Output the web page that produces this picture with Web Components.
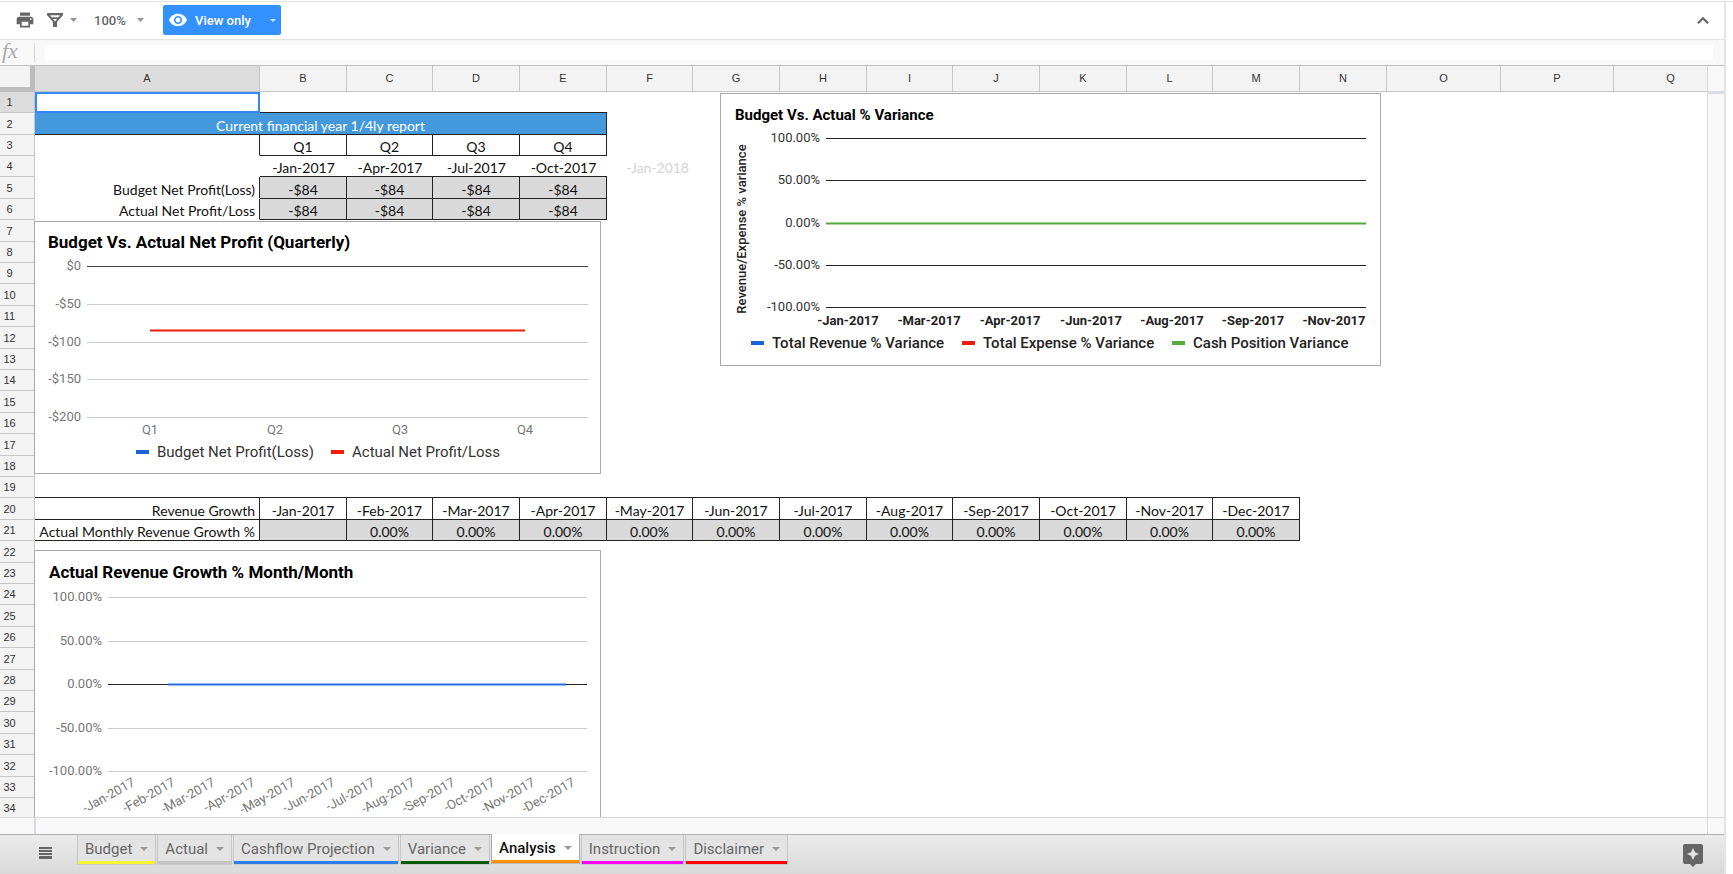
<!DOCTYPE html>
<html lang="en">
<head>
<meta charset="utf-8">
<title>Analysis</title>
<style>
  body { margin: 0; background: #fff; font-family: Roboto, sans-serif; }
</style>
</head>
<body>
<sheet-app></sheet-app>

<script>
class SheetElement extends HTMLElement {
  constructor() {
    super();
    this.attachShadow({ mode: "open" });
  }
  connectedCallback() {
    this.render();
  }
}

class ToolBar extends SheetElement {
  render() {
    this.shadowRoot.innerHTML = `
      <style>
        :host {
          display: flex;
          align-items: center;
          height: 36px;
          padding: 0 11px 1px 13px;
          border-bottom: 1px solid #e2e2e2;
          color: #666;
        }
        button, select {
          appearance: none;
          display: flex;
          align-items: center;
          height: 30px;
          margin: 0;
          padding: 0;
          border: 0;
          background: none;
          color: inherit;
          font: 500 13px Roboto, sans-serif;
        }
        svg { display: block; fill: currentColor; }
        .print { width: 24px; justify-content: center; margin-right: 8px; }
        .filter { gap: 5px; margin-right: 17px; }
        .zoom { display: flex; align-items: center; margin-right: 19px; }
        .zoom select { width: 43px; }
        .view {
          width: 118px;
          padding: 0 5px 0 6px;
          border-radius: 2px;
          background: #3390ff;
          color: #fff;
        }
        .view .eye { margin-right: 8px; }
        .view .caret { margin-left: auto; }
        .hide { margin-left: auto; }
      </style>
      <button class="print" aria-label="Print">
        <svg width="20" height="20" viewBox="0 0 24 24"><path d="M19 8H5c-1.660 0-3 1.340-3 3v6h4v4h12v-4h4v-6c0-1.660-1.340-3-3-3zm-3 11H8v-5h8v5zm3-7c-.55 0-1-.45-1-1s.45-1 1-1 1 .45 1 1-.45 1-1 1zm-1-9H6v4h12V3z"/></svg>
      </button>
      <button class="filter" aria-label="Filter views">
        <svg width="20" height="20" viewBox="0 0 20 20"><path fill-rule="evenodd" d="M2 3h16v2l-6 7v5H8v-5L2 5zM5 5.200l1.600 2h6.800l1.600-2zM8 9l2 2.500L12 9z"/></svg>
        <svg width="7" height="4" viewBox="0 0 7 4" fill-opacity=".7"><path d="M0 0h7L3.500 4z"/></svg>
      </button>
      <label class="zoom">
        <select aria-label="Zoom"><option>100%</option></select>
        <svg width="7" height="4" viewBox="0 0 7 4" fill-opacity=".7"><path d="M0 0h7L3.500 4z"/></svg>
      </label>
      <button class="view">
        <svg class="eye" width="18" height="18" viewBox="1 2 22 20"><path d="M12 4.500C7 4.500 2.730 7.610 1 12c1.730 4.390 6 7.500 11 7.500s9.270-3.110 11-7.500c-1.730-4.390-6-7.500-11-7.500zM12 17c-2.760 0-5-2.240-5-5s2.240-5 5-5 5 2.240 5 5-2.240 5-5 5zm0-8c-1.660 0-3 1.340-3 3s1.340 3 3 3 3-1.340 3-3-1.340-3-3-3z"/></svg>
        View only
        <svg class="caret" width="6" height="3" viewBox="0 0 6 3" fill-opacity=".8"><path d="M0 0h6L3 3z"/></svg>
      </button>
      <button class="hide" aria-label="Hide the menus">
        <svg width="20" height="20" viewBox="0 0 24 24"><path d="M12 8l-7 7 1.800 1.800 5.200-5.200 5.200 5.200L19 15z"/></svg>
      </button>
    `;
  }
}
customElements.define("tool-bar", ToolBar);

class FormulaBar extends SheetElement {
  render() {
    this.shadowRoot.innerHTML = `
      <style>
        :host {
          display: flex;
          align-items: center;
          height: 25px;
          padding-right: 11px;
          background: #f8f8f8;
        }
        label {
          width: 32px;
          height: 19px;
          margin-right: 10px;
          border-right: 1px solid #d4d4d4;
          padding-left: 2px;
          color: #aaa;
          font: italic 22px/15px "Liberation Serif", serif;
        }
        input {
          flex: 1;
          height: 16px;
          padding: 0;
          border: 0;
          background: #fff;
        }
      </style>
      <label for="formula">fx</label>
      <input id="formula" type="text" readonly>
    `;
  }
}
customElements.define("formula-bar", FormulaBar);

const columns = "ABCDEFGHIJKLMNOPQ".split("");
const months = ["Jan", "Feb", "Mar", "Apr", "May", "Jun", "Jul", "Aug", "Sep", "Oct", "Nov", "Dec"].map((m) => `-${m}-2017`);

// class letters: b/r = bottom/right border, g = grey fill, e = end aligned
const fill = (n, text, cls) => Array.from({ length: n }, () => [text, cls]);
const cells = {
  1: [["", "sel"], ...fill(4, "", "b")],
  2: [["Current financial year 1/4ly report", "b r title", 5]],
  3: [["", "r"], ...["Q1", "Q2", "Q3", "Q4"].map((q) => [q, "b r"])],
  4: [["", ""], ...[0, 3, 6, 9].map((m) => [months[m], "b"]), ["-Jan-2018", "e faint"]],
  5: [["Budget Net Profit(Loss)", "e r"], ...fill(4, "-$84", "b r g")],
  6: [["Actual Net Profit/Loss", "e r"], ...fill(4, "-$84", "b r g")],
  19: fill(13, "", "b"),
  20: [["Revenue Growth", "e b r"], ...months.map((m) => [m, "b r"])],
  21: [["Actual Monthly Revenue Growth %", "e b r"], ["", "b r g"], ...fill(11, "0.00%", "b r g")],
};

class SheetGrid extends SheetElement {
  row(n) {
    let used = 0;
    const filled = (cells[n] || []).map(([text, cls, span = 1]) => {
      used += span;
      return `<td class="${cls}" colspan="${span}">${text}</td>`;
    });
    const rest = columns.length - used;
    return `<tr><th scope="row">${n}</th>${filled.join("")}<td colspan="${rest}"></td></tr>`;
  }
  render() {
    const rows = Array.from({ length: 34 }, (_, i) => this.row(i + 1)).join("");
    this.shadowRoot.innerHTML = `
      <style>
        :host { display: block; position: relative; overflow: hidden; }
        table {
          width: 1728px;
          table-layout: fixed;
          border-collapse: separate;
          border-spacing: 0;
          border-top: 1px solid #c0c0c0;
        }
        col { width: 87px; }
        col:nth-child(3n+4) { width: 86px; }
        col.head { width: 35px; }
        col.a { width: 225px; }
        col.o { width: 114px; }
        col.p { width: 113px; }
        th, td { box-sizing: border-box; padding: 0; white-space: nowrap; }
        th {
          border-right: 1px solid #c6c6c6;
          border-bottom: 1px solid #c6c6c6;
          background: #f3f3f3;
          color: #333;
          font: 11px "Liberation Sans", sans-serif;
        }
        thead tr { height: 26px; }
        thead th { padding-bottom: 2px; }
        thead td {
          border-right: 5px solid #bcbcbc;
          border-bottom: 5px solid #bcbcbc;
          background: #f3f3f3;
        }
        thead th:nth-child(2), tbody tr:first-child th { background: #dcdcdc; }
        tbody tr { height: 21px; }
        tbody tr:nth-child(5n+2), tbody tr:nth-child(5n+5) { height: 22px; }
        tbody th { padding-right: 15px; }
        tbody td {
          height: 20px;
          border-bottom: 1px solid transparent;
          vertical-align: bottom;
          text-align: center;
          color: #111;
          font: 14px/16px Lato, sans-serif;
        }
        tbody .b { border-bottom: 1px solid #222; }
        tbody .r { border-right: 1px solid #222; }
        tbody .g { background: #d9d9d9; }
        tbody .e { padding-right: 4px; text-align: right; }
        tbody .faint { color: #d4d4d4; }
        tbody .title { background: #4499dc; color: #fff; }
        tbody .sel { border: 2px solid #3388f5; }
      </style>
      <table>
        <colgroup>
          <col class="head"><col class="a">
          ${"<col>".repeat(13)}
          <col class="o"><col class="p"><col class="o">
        </colgroup>
        <thead><tr><td></td>${columns.map((c) => `<th scope="col">${c}</th>`).join("")}</tr></thead>
        <tbody>${rows}</tbody>
      </table>
      <slot></slot>
    `;
  }
}
customElements.define("sheet-grid", SheetGrid);

const charts = {
  quarterly: {
    width: 567, height: 253,
    title: { text: "Budget Vs. Actual Net Profit (Quarterly)", x: 14, y: 27, size: 17 },
    plot: { left: 53, right: 554 },
    ticks: [["$0", 45, "#444"], ["-$50", 83, "#ccc"], ["-$100", 121, "#ccc"], ["-$150", 158, "#ccc"], ["-$200", 196, "#ccc"]],
    tickColor: "#777",
    line: { x1: 116, x2: 491, y: 109, color: "#ee1c08" },
    labels: { names: ["Q1", "Q2", "Q3", "Q4"], x: 116, step: 125, y: 213, color: "#777", weight: 400 },
    legend: { y: 236, color: "#333", weight: 400, items: [["Budget Net Profit(Loss)", 102, "#1a62d8"], ["Actual Net Profit/Loss", 297, "#ee1c08"]] },
  },
  variance: {
    width: 661, height: 273,
    title: { text: "Budget Vs. Actual % Variance", x: 15, y: 27, size: 15 },
    plot: { left: 106, right: 646 },
    ticks: [["100.00%", 45, "#222"], ["50.00%", 87, "#222"], ["0.00%", 130, "#222"], ["-50.00%", 172, "#222"], ["-100.00%", 214, "#222"]],
    tickColor: "#333",
    line: { x1: 106, x2: 646, y: 130, color: "#55aa3c" },
    labels: { names: [0, 2, 3, 5, 7, 8, 10].map((m) => months[m]), x: 128, step: 81, y: 232, color: "#222", weight: 700 },
    side: { text: "Revenue/Expense % variance", x: 26, y: 136 },
    legend: { y: 255, color: "#222", weight: 500, items: [["Total Revenue % Variance", 31, "#1a62d8"], ["Total Expense % Variance", 242, "#ee1c08"], ["Cash Position Variance", 452, "#55aa3c"]] },
  },
  growth: {
    width: 567, height: 290,
    title: { text: "Actual Revenue Growth % Month/Month", x: 15, y: 28, size: 17 },
    plot: { left: 74, right: 553 },
    ticks: [["100.00%", 47, "#ccc"], ["50.00%", 91, "#ccc"], ["0.00%", 134, "#222"], ["-50.00%", 178, "#ccc"], ["-100.00%", 221, "#ccc"]],
    tickColor: "#777",
    line: { x1: 134, x2: 532, y: 134, color: "#2a6ce0" },
    labels: { names: months, x: 102, step: 40, y: 235, color: "#777", weight: 400, rotate: true },
  },
};

class SheetChart extends SheetElement {
  render() {
    const c = charts[this.getAttribute("name")];
    const ticks = c.ticks.map(([text, y, color]) => `
      <path d="M${c.plot.left} ${y}.5H${c.plot.right}" stroke="${color}"/>
      <text x="${c.plot.left - 6}" y="${y + 4}" text-anchor="end" font-size="13" fill="${c.tickColor}">${text}</text>`).join("");
    const l = c.labels;
    const labels = l.names.map((name, i) => {
      const x = l.x + i * l.step;
      return l.rotate
        ? `<text transform="translate(${x} ${l.y}) rotate(-29)" text-anchor="end" font-size="13" fill="${l.color}">${name}</text>`
        : `<text x="${x}" y="${l.y}" text-anchor="middle" font-size="13" font-weight="${l.weight}" fill="${l.color}">${name}</text>`;
    }).join("");
    const side = c.side
      ? `<text transform="translate(${c.side.x} ${c.side.y}) rotate(-90)" text-anchor="middle" font-size="13" font-weight="500" fill="#222">${c.side.text}</text>`
      : "";
    const legend = c.legend
      ? c.legend.items.map(([text, x, color]) => `
        <rect x="${x}" y="${c.legend.y - 7}" width="13" height="4" fill="${color}"/>
        <text x="${x + 21}" y="${c.legend.y}" font-size="15" font-weight="${c.legend.weight}" fill="${c.legend.color}">${text}</text>`).join("")
      : "";
    this.shadowRoot.innerHTML = `
      <style>
        :host {
          display: block;
          box-sizing: border-box;
          border: 1px solid #aaa;
          background: #fff;
        }
        svg { display: block; font-family: Roboto, sans-serif; }
      </style>
      <svg width="${c.width - 2}" height="${c.height - 2}" viewBox="1 1 ${c.width - 2} ${c.height - 2}">
        <text x="${c.title.x}" y="${c.title.y}" font-size="${c.title.size}" font-weight="700" fill="#000">${c.title.text}</text>
        ${ticks}
        <path d="M${c.line.x1} ${c.line.y}.5H${c.line.x2}" stroke="${c.line.color}" stroke-width="2"/>
        ${labels}${side}${legend}
      </svg>
    `;
  }
}
customElements.define("sheet-chart", SheetChart);

class SheetTab extends SheetElement {
  render() {
    this.shadowRoot.innerHTML = `
      <style>
        :host { display: block; }
        button {
          display: flex;
          align-items: center;
          gap: 8px;
          height: 30px;
          margin: 0;
          padding: 0 7px 2px;
          border: 1px solid #c4c4c4;
          border-top: 0;
          border-bottom: 1px solid #ccc;
          background: #e3e3e3;
          box-shadow: inset 0 -3px var(--tab-color);
          color: #666;
          font: 15px Roboto, sans-serif;
        }
        :host([active]) button {
          border-color: #aaa #aaa #bbb;
          background: #fff;
          color: #111;
          font-weight: 500;
          margin-top: -1px;
        }
        svg { display: block; fill: #999; }
      </style>
      <button role="tab">
        <slot></slot>
        <svg width="8" height="4" viewBox="0 0 8 4"><path d="M0 0h8L4 4z"/></svg>
      </button>
    `;
  }
}
customElements.define("sheet-tab", SheetTab);

class SheetTabs extends SheetElement {
  render() {
    this.shadowRoot.innerHTML = `
      <style>
        :host {
          display: flex;
          align-items: flex-start;
          height: 39px;
          border-top: 1px solid #b0b0b0;
          background: linear-gradient(#ebebeb, #d9d9d9);
        }
        .icon { display: flex; margin: 0; padding: 0; border: 0; background: none; }
        .all { margin: 12px 25px 0 39px; }
        .explore { margin: 9px 21px 0 auto; }
        nav { display: flex; gap: 1px; }
        svg { display: block; fill: #666; }
      </style>
      <button class="icon all" aria-label="All sheets">
        <svg width="13" height="12" viewBox="0 0 13 12"><path d="M0 0h13v2H0zM0 3h13v2H0zM0 6h13v2H0zM0 9h13v3H0z"/></svg>
      </button>
      <nav role="tablist"><slot></slot></nav>
      <button class="icon explore" aria-label="Explore">
        <svg width="20" height="23" viewBox="0 0 20 23"><path fill-rule="evenodd" d="M2 0h16a2 2 0 0 1 2 2v16a2 2 0 0 1-2 2h-5l-3 3-3-3H2a2 2 0 0 1-2-2V2a2 2 0 0 1 2-2zm8 4l-2 4.200L4 10l4 1.800L10 16l2-4.200L16 10l-4-1.800z"/></svg>
      </button>
    `;
  }
}
customElements.define("sheet-tabs", SheetTabs);

class SheetApp extends SheetElement {
  render() {
    this.shadowRoot.innerHTML = `
      <style>
        :host {
          display: block;
          box-sizing: border-box;
          height: 100vh;
          padding-top: 1px;
        }
        .page { height: 100%; box-sizing: border-box; border-top: 1px solid #e4e4e4; }
        .frame {
          display: flex;
          flex-direction: column;
          height: 100%;
          margin-right: 7px;
          border-right: 2px solid #e4e4e4;
        }
        main { display: flex; flex: 1; min-height: 0; }
        sheet-grid { flex: 1; min-width: 0; }
        .vscroll {
          width: 16px;
          border-left: 1px solid #d8d8d8;
          border-top: 1px solid #c0c0c0;
          background: #f8f8f8;
        }
        .vscroll::before {
          content: "";
          display: block;
          height: 25px;
          border-bottom: 3px solid #dadde3;
        }
        .hscroll {
          display: flex;
          height: 16px;
          border-top: 1px solid #d8d8d8;
          background: #f8f8f8;
        }
        .hscroll::before { content: ""; width: 34px; border-right: 2px solid #d5dade; }
        .hscroll::after { content: ""; width: 16px; margin-left: auto; border-left: 1px solid #d8d8d8; }
        /* charts float over the cells */
        sheet-chart { position: absolute; }
        .quarterly { left: 34px; top: 156px; }
        .variance { left: 720px; top: 28px; }
        .growth { left: 34px; top: 485px; }
      </style>
      <div class="page"><div class="frame">
        <tool-bar></tool-bar>
        <formula-bar></formula-bar>
        <main>
          <sheet-grid>
            <sheet-chart class="quarterly" name="quarterly"></sheet-chart>
            <sheet-chart class="variance" name="variance"></sheet-chart>
            <sheet-chart class="growth" name="growth"></sheet-chart>
          </sheet-grid>
          <div class="vscroll"></div>
        </main>
        <div class="hscroll"></div>
        <sheet-tabs>
          <sheet-tab style="--tab-color: #f5f52e">Budget</sheet-tab>
          <sheet-tab style="--tab-color: #c4c4c4">Actual</sheet-tab>
          <sheet-tab style="--tab-color: #2b7de9">Cashflow Projection</sheet-tab>
          <sheet-tab style="--tab-color: #065c06">Variance</sheet-tab>
          <sheet-tab style="--tab-color: #ff9000" active>Analysis</sheet-tab>
          <sheet-tab style="--tab-color: #ff00ff">Instruction</sheet-tab>
          <sheet-tab style="--tab-color: #ff0000">Disclaimer</sheet-tab>
        </sheet-tabs>
      </div></div>
    `;
  }
}
customElements.define("sheet-app", SheetApp);
</script>
</body>
</html>
